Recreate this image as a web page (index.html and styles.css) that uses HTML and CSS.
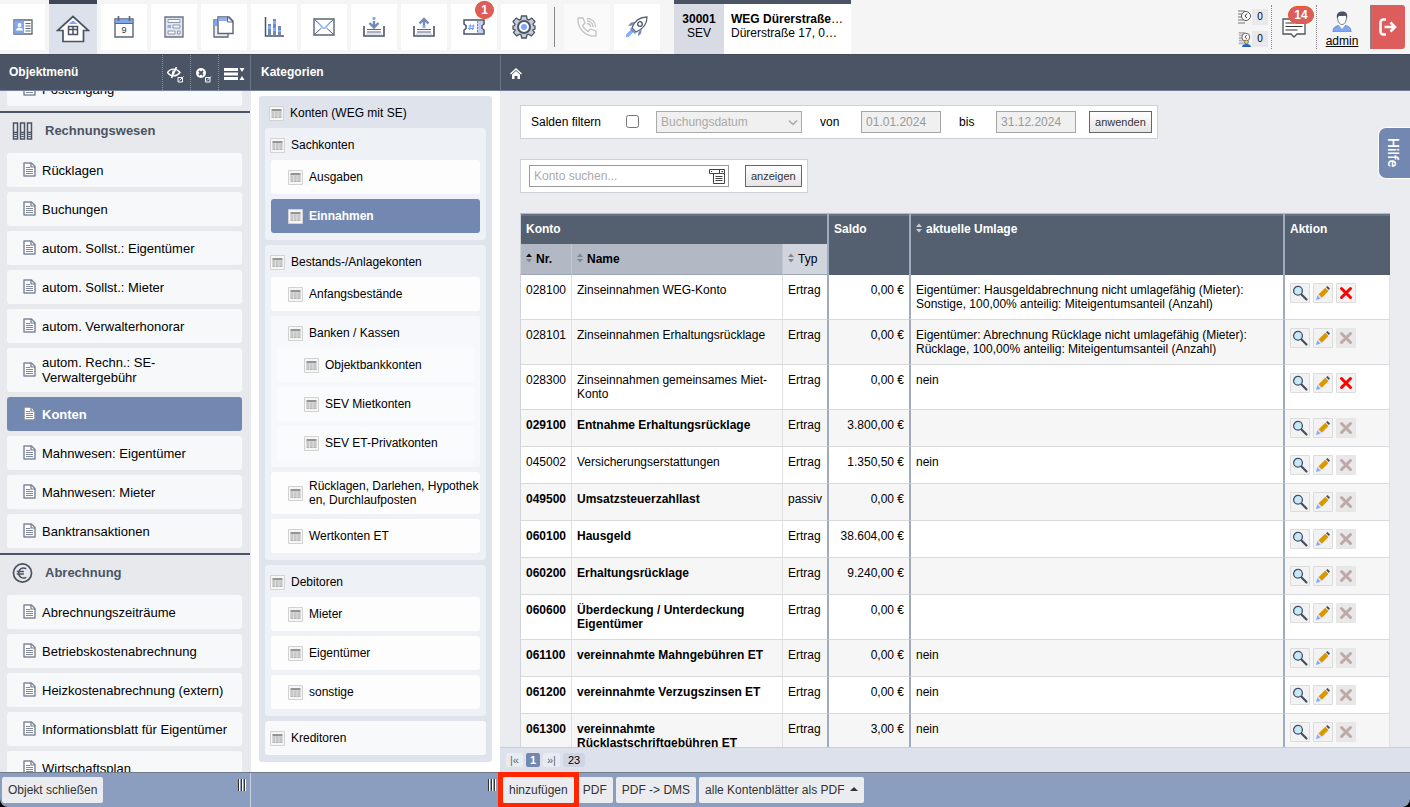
FILE: index.html
```html
<!DOCTYPE html>
<html lang="de">
<head>
  <meta charset="UTF-8">
  <meta name="viewport" content="width=device-width, initial-scale=1.0">
  <title>Konten - WEG Dürerstraße</title>
  <link rel="stylesheet" href="styles.css">
</head>
<body>
  <!-- shared icons -->
  <svg class="sprite" aria-hidden="true">
    <symbol id="i-doc" viewBox="0 0 13 15">
      <path d="M1 1h7.500L12 4.500V14H1z" fill="#fff" stroke="#80889a" stroke-width="1.500" stroke-linejoin="round"/>
      <path d="M8 1v4h4" fill="none" stroke="#6d7587" stroke-width="1.200"/>
      <path d="M3 5.500h4M3 7.500h7M3 9.500h7M3 11.500h7" fill="none" stroke="#80889a" stroke-width="1.200"/>
    </symbol>
    <symbol id="i-table" viewBox="0 0 15 15">
      <path d="M.5.5h14v14H.5z" fill="#f6f6f6" stroke="#d2d2d2"/>
      <path d="M2.500 3h10v2.500h-10z" fill="#949494"/>
      <path d="M2.500 5.500h10V12h-10z" fill="#b4b4b4"/>
      <path d="M2.500 6h10M2.500 8h10M2.500 10h10M5.500 5.500V12M9 5.500V12" stroke="#e4e4e4" stroke-width=".8"/>
    </symbol>
    <symbol id="i-view" viewBox="0 0 18 18">
      <path d="M10 10l5.500 5.500" stroke="#454f62" stroke-width="2.200" stroke-linecap="round"/>
      <circle cx="7" cy="6.800" r="4.400" fill="#c5e8fb" stroke="#454f62" stroke-width="1.300"/>
    </symbol>
    <symbol id="i-edit" viewBox="0 0 18 18">
      <path d="M2 16l1.500-5 3.500 3.500z" fill="#7ea6ff"/>
      <path d="M3.300 11.500l1.200-1.200 3.400 3.400-1.200 1.200z" fill="#d5e2fb"/>
      <path d="M4.500 10.300l6.800-6.500 3.200 3.200-6.600 6.700z" fill="#dc9600"/>
      <path d="M12 3.200L13.500 2 16 4.500 14.800 6z" fill="#454f62"/>
    </symbol>
    <symbol id="i-delete" viewBox="0 0 18 18">
      <path d="M4.500 4.500l9 9M13.500 4.500l-9 9" stroke="currentColor" stroke-width="3" stroke-linecap="round"/>
    </symbol>
    <symbol id="i-sort" viewBox="0 0 6 10">
      <path d="M0 4l3-3.500L6 4z"/>
      <path d="M0 6l3 3.500L6 6z"/>
    </symbol>
    <symbol id="i-sort-asc" viewBox="0 0 6 10">
      <path d="M0 4l3-3.500L6 4z" fill="#111"/>
      <path d="M0 6l3 3.500L6 6z"/>
    </symbol>
    <symbol id="i-clock" viewBox="0 0 13 16">
      <path d="M0 2h7M0 5h6M0 8h6M0 11h6M0 14h7" stroke="#b4b4b4" stroke-width="2"/>
      <circle cx="8" cy="7" r="4.500" fill="#fff" stroke="#555"/>
      <path d="M9 4.500L7 7l2 2" fill="none" stroke="#333"/>
    </symbol>
  </svg>

  <div class="app">
    <header class="topbar">
      <nav class="tools" aria-label="Werkzeuge">
        <a class="tool tool-first" href="#" aria-label="Kontakte">
          <svg width="20" height="16" viewBox="0 0 20 16"><path d="M1 1h18v14H1z" fill="#fff" stroke="#5b6679" stroke-width="1.300"/><path d="M1.500 1.500H11v13H1.500z" fill="#7ea6f5"/><circle cx="6.500" cy="6" r="2" fill="#fff"/><path d="M3 11.500c0-4 7-4 7 0z" fill="#fff"/><path d="M12.500 4.500h5M12.500 7h5M12.500 9.500h5M12.500 12h5" stroke="#5b6679"/></svg>
        </a>
        <a class="tool tool-active" href="#" aria-label="Objekte">
          <svg width="34" height="28" viewBox="0 0 34 28"><path d="M17 1.500L1.500 15.500h5.500v11h20.500v-11h5z" fill="#fff" stroke="#4a5464" stroke-width="1.700"/><path d="M12.500 9L17 5.500 21.500 9z" fill="#7ea6ff"/><path d="M12.500 11.500h9v8h-9zM12.500 14.500h9M17 11.500v8" fill="none" stroke="#4a5464" stroke-width="1.500"/></svg>
        </a>
        <a class="tool" href="#" aria-label="Kalender">
          <svg width="20" height="22" viewBox="0 0 20 22"><path d="M1 3h18v18H1z" fill="#fff" stroke="#5b6679" stroke-width="1.400"/><path d="M2 3.500h16v3.500H2z" fill="#7ea6f5"/><path d="M1 7.500h18" stroke="#5b6679"/><path d="M4.500 0v5M15.500 0v5" stroke="#5b6679" stroke-width="1.600"/><text class="cal-day" x="10" y="17">9</text></svg>
        </a>
        <a class="tool" href="#" aria-label="Formulare">
          <svg width="20" height="22" viewBox="0 0 20 22"><path d="M1 1h18v20H1z" fill="#e3e6ee" stroke="#6c7587" stroke-width="1.400"/><path d="M4 3.500h12v3H4zM9 9h7v3H9zM4 15h7v3H4zM13.500 15H16v3h-2.500z" fill="#f8f9fb" stroke="#8b96ac"/><path d="M3.500 9H7v3H3.500z" fill="#8eaef0"/></svg>
        </a>
        <a class="tool" href="#" aria-label="Dokumente">
          <svg width="22" height="22" viewBox="0 0 22 22"><path d="M1 4h14v17H1z" fill="#edf0f5" stroke="#5b6679" stroke-width="1.300"/><path d="M1.500 3.500h3V10h-3z" fill="#7ea6f5"/><path d="M5 1h11l4 4v12.500H5z" fill="#fff" stroke="#5b6679" stroke-width="1.400"/><path d="M5.500 1.500H14V5H5.500z" fill="#8eaef5"/><path d="M14.500 1v5H20z" fill="#fff" stroke="#5b6679"/></svg>
        </a>
        <a class="tool" href="#" aria-label="Auswertungen">
          <svg width="20" height="20" viewBox="0 0 20 20"><path d="M1.500 0v19H20" fill="none" stroke="#4a5464" stroke-width="1.500"/><path d="M4 7h3v11H4zM9 2h3v16H9zM14 9h3v9h-3z" fill="#7388b3"/><path d="M4 9h3v3H4zM9 4h3v3H9zM9 11h3v3H9zM14 13h3v2h-3z" fill="#83abff"/></svg>
        </a>
        <a class="tool" href="#" aria-label="Nachrichten">
          <svg width="22" height="18" viewBox="0 0 22 18"><path d="M1 1h20v16H1z" fill="#fff" stroke="#5b6679" stroke-width="1.400"/><path d="M1 17l7.500-7M21 17l-7.500-7M1 1l5 4.500M21 1l-5 4.500" stroke="#5b6679"/><path d="M5 4.500l4.500 5c1 1 2 1 3 0l4.500-5" fill="none" stroke="#83abff" stroke-width="1.400"/></svg>
        </a>
        <a class="tool" href="#" aria-label="Eingang">
          <svg width="22" height="20" viewBox="0 0 22 20"><path d="M1 9v10h20V9" fill="none" stroke="#4a5464" stroke-width="1.600"/><path d="M3 17h16" stroke="#dfe3ec" stroke-width="2"/><path d="M4 12.500h14M4 15h14" stroke="#5b6679"/><path d="M11 4v6M6.500 6L11 10.500 15.500 6" fill="none" stroke="#7388b3" stroke-width="2.400"/><path d="M9.500 0h3v3h-3z" fill="#83abff"/></svg>
        </a>
        <a class="tool" href="#" aria-label="Ausgang">
          <svg width="22" height="20" viewBox="0 0 22 20"><path d="M1 9v10h20V9" fill="none" stroke="#4a5464" stroke-width="1.600"/><path d="M3 17h16" stroke="#dfe3ec" stroke-width="2"/><path d="M4 12.500h14M4 15h14" stroke="#5b6679"/><path d="M11 2v6M6.500 6.500L11 2l4.500 4.500" fill="none" stroke="#7388b3" stroke-width="2.400"/><path d="M9.500 8h3v3h-3z" fill="#83abff"/></svg>
        </a>
        <a class="tool" href="#" aria-label="Tickets">
          <svg width="22" height="16" viewBox="0 0 22 16"><path d="M1 1h20v4l-2 1.500v3l2 1.500v4H1v-4l2-1.500v-3L1 5z" fill="#fff" stroke="#4a5464" stroke-width="1.500"/><path d="M14 2h6v3l-2 1v4l2 1v3h-6z" fill="#c2cff0"/><path d="M14.500 2v12" stroke="#7388b3" stroke-dasharray="2 1"/><path d="M7.500 5.500L6.500 11M10.500 5.500L9.500 11M5.500 7h6M5 9.500h6" stroke="#6f99f5"/></svg>
          <span class="badge badge-small">1</span>
        </a>
        <a class="tool" href="#" aria-label="Einstellungen">
          <svg width="24" height="24" viewBox="0 0 24 24"><path d="M9.500 1h5l.6 3.200 1.800.8L19.600 3 23 6.600l-2 2.600.5 1.300 1.500.5v3l-2.200 1 1.700 2.500-3.200 3.400-2.700-1.700-1.700.8-.6 3h-4.600l-.6-3-1.700-.8-2.700 1.700-3.200-3.400L3.200 15 1 14v-3l1.500-.5.5-1.300-2-2.600L4.400 3l2.700 2 1.800-.8z" fill="#c6ccd9" stroke="#4a5464" stroke-width="1.300"/><circle cx="12" cy="12" r="6" fill="#fff" stroke="#4a5464" stroke-width="2"/><circle cx="12" cy="12" r="3" fill="#7ea6ff"/></svg>
        </a>
        <span class="tool-divider"></span>
        <a class="tool tool-disabled" href="#" aria-label="Telefon">
          <svg width="20" height="20" viewBox="0 0 20 20" fill="none" stroke="#c2c2c2" stroke-width="1.300" stroke-linejoin="round"><path d="M1 1h5l2 5-2.500 2.500c1 2.500 3 4.500 5.500 6l2.500-2.500 5.500 2v5C9 20 0 12 1 1z"/><path d="M10 1.500c5 0 8.500 3.500 8.500 8.500M10 4c3.500 0 6 2.500 6 6M10 6.500c2 0 3.500 1.500 3.500 3.500"/></svg>
        </a>
        <a class="tool" href="#" aria-label="Start">
          <svg width="22" height="22" viewBox="0 0 22 22"><path d="M6 9.500L2 10l3-3.500 3.500-.5zM12.500 16l-.5 4.500 3-3 .8-4z" fill="#7388b3"/><path d="M6 12c2-6 7-11 15-11 0 7-4 12-11 15z" fill="#fff" stroke="#5b6679" stroke-width="1.300"/><path d="M1.500 19.500l4-4" stroke="#83abff" stroke-width="3.500" stroke-linecap="round"/><path d="M4.500 12.500l5 5" stroke="#7388b3" stroke-width="1.500"/><circle cx="14" cy="8" r="2.300" fill="#fff" stroke="#4a5464" stroke-width="1.300"/></svg>
        </a>
      </nav>

      <a class="object" href="#">
        <span class="object-id"><b>30001</b><span>SEV</span></span>
        <span class="object-name"><span><b>WEG Dürerstraße</b>…</span><span>Dürerstraße 17, 0…</span></span>
      </a>

      <div class="status">
        <div class="counters">
          <span class="counter"><svg width="13" height="16"><use href="#i-clock"/></svg><span>0</span></span>
          <span class="counter"><svg width="13" height="16" viewBox="0 0 13 16"><use href="#i-clock" width="13" height="14"/><circle cx="8.500" cy="11" r="2" fill="#f2c14e" stroke="#555" stroke-width=".6"/><path d="M4 16c0-4 9-4 9 0z" fill="#1d63c4"/></svg><span>0</span></span>
        </div>
        <a class="messages" href="#" aria-label="Mitteilungen">
          <svg width="24" height="20" viewBox="0 0 24 20"><path d="M1 1h22v15h-8l-3 3-3-3H1z" fill="#fff" stroke="#4a5464" stroke-width="1.300"/><path d="M3.500 5H12M3.500 8.500h17M3.500 12h12" stroke="#333" stroke-width="1.200"/></svg>
          <span class="badge">14</span>
        </a>
        <a class="user" href="#">
          <svg width="20" height="21" viewBox="0 0 20 21"><path d="M1 21c0-5 3-6 6-6.500l3 3 3-3c3 .5 6 1.500 6 6.500z" fill="#7ea6f5" stroke="#6f8fc8"/><path d="M7.500 12h5v3L10 18l-2.500-3z" fill="#fff"/><path d="M5.500 5.500c0 5 2 8 4.500 8s4.500-3 4.500-8L13 4H7z" fill="#fff" stroke="#4a5464" stroke-width=".8"/><path d="M5 7.500C4 2 7 .5 10.500.500S16 3 15 7.500l-1.500-3-3 .5L7 5z" fill="#4a5464"/></svg>
          <span>admin</span>
        </a>
        <button class="logout" type="button" aria-label="Abmelden">
          <svg width="18" height="18" viewBox="0 0 18 18" fill="none" stroke="#fff" stroke-width="2.600"><path d="M7 1.500H4.500a3 3 0 0 0-3 3v9a3 3 0 0 0 3 3H7"/><path d="M5.500 9H15M11.500 4.500L16 9l-4.500 4.500"/></svg>
        </button>
      </div>
    </header>

    <div class="headbar">
      <div class="head-menu">
        <h2>Objektmenü</h2>
        <button type="button" aria-label="Ausblenden">
          <svg width="17" height="16" viewBox="0 0 17 16" fill="none" stroke="#fff"><path d="M.5 5.500C3.500 1 9.500 1 13 5.500 9.500 10 3.500 10 .5 5.500z" stroke-width="1.400"/><path d="M6.500 3.500l-1 4M9.500 0l-5 11" stroke-width="1.700"/><path d="M11 10.500h4.500V15H11zM12.500 13.500L16.500 9.500"/></svg>
        </button>
        <button type="button" aria-label="Schließen">
          <svg width="17" height="16" viewBox="0 0 17 16"><circle cx="6" cy="6" r="5" fill="#fff"/><path d="M4 4l4 4M8 4L4 8" stroke="#4a5464" stroke-width="1.800"/><path d="M10.500 10.500H15V15h-4.500zM12 13.500L16 9.500" fill="none" stroke="#fff"/></svg>
        </button>
        <button class="wide" type="button" aria-label="Ansicht">
          <svg width="21" height="12" viewBox="0 0 21 12"><path d="M0 1.500h14M0 6h14M0 10.500h14" stroke="#fff" stroke-width="3"/><path d="M15.500 0h5L18 4zM15.500 12h5L18 8z" fill="#fff"/></svg>
        </button>
      </div>
      <div class="head-categories"><h2>Kategorien</h2></div>
      <div class="head-path">
        <a href="#" aria-label="Start"><svg width="12" height="11" viewBox="0 0 12 11"><path d="M6 0l6 5.500-1 1L6 2 1 6.500l-1-1z" fill="#fff"/><path d="M2 6.500L6 3l4 3.500V11H7.500V8h-3v3H2z" fill="#fff"/></svg></a>
      </div>
    </div>

    <main class="columns">
      <nav class="menu" aria-label="Objektmenü">
        <div class="menu-scroll">
          <a class="menu-item" href="#"><svg><use href="#i-doc"/></svg>Posteingang</a>

          <h3 class="menu-title">
            <svg width="20" height="18" viewBox="0 0 20 18" fill="none" stroke="#4a5464" stroke-width="1.500"><path d="M1 1h4v16H1zM8 1h4v16H8zM15 1h4v16h-4z"/><path d="M1 10.500h4M8 10.500h4M15 10.500h4"/><path d="M2.500 12v4M9.500 12v4M16.500 12v4M3.500 12v4M10.500 12v4M17.500 12v4" stroke-dasharray="1 1"/></svg>
            Rechnungswesen
          </h3>
          <a class="menu-item" href="#"><svg><use href="#i-doc"/></svg>Rücklagen</a>
          <a class="menu-item" href="#"><svg><use href="#i-doc"/></svg>Buchungen</a>
          <a class="menu-item" href="#"><svg><use href="#i-doc"/></svg>autom. Sollst.: Eigentümer</a>
          <a class="menu-item" href="#"><svg><use href="#i-doc"/></svg>autom. Sollst.: Mieter</a>
          <a class="menu-item" href="#"><svg><use href="#i-doc"/></svg>autom. Verwalterhonorar</a>
          <a class="menu-item" href="#"><svg><use href="#i-doc"/></svg>autom. Rechn.: SE-Verwaltergebühr</a>
          <a class="menu-item selected" href="#" aria-current="page"><svg><use href="#i-doc"/></svg>Konten</a>
          <a class="menu-item" href="#"><svg><use href="#i-doc"/></svg>Mahnwesen: Eigentümer</a>
          <a class="menu-item" href="#"><svg><use href="#i-doc"/></svg>Mahnwesen: Mieter</a>
          <a class="menu-item" href="#"><svg><use href="#i-doc"/></svg>Banktransaktionen</a>

          <h3 class="menu-title">
            <svg width="22" height="22" viewBox="0 0 22 22" fill="none" stroke="#4a5464" stroke-width="1.800"><circle cx="11" cy="11" r="9.500"/><path d="M15 6.500c-4-2-8 0-8 4.500s4 6.500 8 4.500M5 9.500h7.500M5 12h7.500" stroke-width="1.500"/></svg>
            Abrechnung
          </h3>
          <a class="menu-item" href="#"><svg><use href="#i-doc"/></svg>Abrechnungszeiträume</a>
          <a class="menu-item" href="#"><svg><use href="#i-doc"/></svg>Betriebskostenabrechnung</a>
          <a class="menu-item" href="#"><svg><use href="#i-doc"/></svg>Heizkostenabrechnung (extern)</a>
          <a class="menu-item" href="#"><svg><use href="#i-doc"/></svg>Informationsblatt für Eigentümer</a>
          <a class="menu-item" href="#"><svg><use href="#i-doc"/></svg>Wirtschaftsplan</a>
        </div>
      </nav>

      <nav class="categories" aria-label="Kategorien">
        <div class="group root">
          <a class="group-title" href="#"><svg><use href="#i-table"/></svg>Konten (WEG mit SE)</a>

          <div class="group">
            <a class="group-title" href="#"><svg><use href="#i-table"/></svg>Sachkonten</a>
            <a class="leaf" href="#"><svg><use href="#i-table"/></svg>Ausgaben</a>
            <a class="leaf selected" href="#" aria-current="page"><svg><use href="#i-table"/></svg>Einnahmen</a>
          </div>

          <div class="group">
            <a class="group-title" href="#"><svg><use href="#i-table"/></svg>Bestands-/Anlagekonten</a>
            <a class="leaf" href="#"><svg><use href="#i-table"/></svg>Anfangsbestände</a>
            <div class="group nested">
              <a class="group-title" href="#"><svg><use href="#i-table"/></svg>Banken / Kassen</a>
              <a class="leaf" href="#"><svg><use href="#i-table"/></svg>Objektbankkonten</a>
              <a class="leaf" href="#"><svg><use href="#i-table"/></svg>SEV Mietkonten</a>
              <a class="leaf" href="#"><svg><use href="#i-table"/></svg>SEV ET-Privatkonten</a>
            </div>
            <a class="leaf" href="#"><svg><use href="#i-table"/></svg>Rücklagen, Darlehen, Hypotheken, Durchlaufposten</a>
            <a class="leaf" href="#"><svg><use href="#i-table"/></svg>Wertkonten ET</a>
          </div>

          <div class="group">
            <a class="group-title" href="#"><svg><use href="#i-table"/></svg>Debitoren</a>
            <a class="leaf" href="#"><svg><use href="#i-table"/></svg>Mieter</a>
            <a class="leaf" href="#"><svg><use href="#i-table"/></svg>Eigentümer</a>
            <a class="leaf" href="#"><svg><use href="#i-table"/></svg>sonstige</a>
          </div>

          <a class="leaf top-leaf" href="#"><svg><use href="#i-table"/></svg>Kreditoren</a>
        </div>
      </nav>

      <section class="content">
        <div class="content-scroll">
          <form class="panel filter">
            <label for="saldo-filter">Salden filtern</label>
            <input type="checkbox" id="saldo-filter">
            <span class="select">
              <select aria-label="Datumsart" disabled><option>Buchungsdatum</option></select>
              <svg width="10" height="6" viewBox="0 0 10 6"><path d="M1 .5l4 4 4-4" fill="none" stroke="#aaa" stroke-width="1.500"/></svg>
            </span>
            <label class="label-from" for="date-from">von</label>
            <input class="field date" type="text" id="date-from" value="01.01.2024" disabled>
            <label class="label-to" for="date-to">bis</label>
            <input class="field date" type="text" id="date-to" value="31.12.2024" disabled>
            <button class="btn" type="button">anwenden</button>
          </form>

          <form class="panel search">
            <span class="search-field">
              <input class="field" type="text" placeholder="Konto suchen..." aria-label="Konto suchen">
              <svg width="16" height="15" viewBox="0 0 16 15" fill="#fff" stroke="#444"><path d="M.5.5h15v4H.5z"/><path d="M4.500 4.500h11v10h-11z"/><path d="M6.500 7.500h7M6.500 9.500h7M6.500 11.500h7M10.500 1v3M2 2.500h1"/><path d="M12 2h2.500l-1.200 1.500z" fill="#444" stroke="none"/></svg>
            </span>
            <button class="btn" type="button">anzeigen</button>
          </form>

          <table class="accounts">
            <colgroup>
              <col class="c-nr"><col class="c-name"><col class="c-type"><col class="c-saldo"><col><col class="c-action">
            </colgroup>
            <thead>
              <tr>
                <th colspan="3">Konto</th>
                <th rowspan="2" class="main">Saldo</th>
                <th rowspan="2" class="main"><svg class="sort light"><use href="#i-sort"/></svg>aktuelle Umlage</th>
                <th rowspan="2" class="main">Aktion</th>
              </tr>
              <tr class="sub">
                <th><svg class="sort"><use href="#i-sort-asc"/></svg>Nr.</th>
                <th><svg class="sort"><use href="#i-sort"/></svg>Name</th>
                <th class="type"><svg class="sort"><use href="#i-sort"/></svg>Typ</th>
              </tr>
            </thead>
            <tbody>
              <tr>
                <td>028100</td><td>Zinseinnahmen WEG-Konto</td><td>Ertrag</td><td class="main num">0,00 €</td>
                <td class="main">Eigentümer: Hausgeldabrechnung nicht umlagefähig (Mieter): Sonstige, 100,00% anteilig: Miteigentumsanteil (Anzahl)</td>
                <td class="main"><div class="actions">
                  <button type="button" aria-label="Anzeigen"><svg><use href="#i-view"/></svg></button>
                  <button type="button" aria-label="Bearbeiten"><svg><use href="#i-edit"/></svg></button>
                  <button type="button" aria-label="Löschen"><svg><use href="#i-delete"/></svg></button>
                </div></td>
              </tr>
              <tr>
                <td>028101</td><td>Zinseinnahmen Erhaltungsrücklage</td><td>Ertrag</td><td class="main num">0,00 €</td>
                <td class="main">Eigentümer: Abrechnung Rücklage nicht umlagefähig (Mieter): Rücklage, 100,00% anteilig: Miteigentumsanteil (Anzahl)</td>
                <td class="main"><div class="actions">
                  <button type="button" aria-label="Anzeigen"><svg><use href="#i-view"/></svg></button>
                  <button type="button" aria-label="Bearbeiten"><svg><use href="#i-edit"/></svg></button>
                  <button type="button" aria-label="Löschen" disabled><svg><use href="#i-delete"/></svg></button>
                </div></td>
              </tr>
              <tr>
                <td>028300</td><td>Zinseinnahmen gemeinsames Miet-Konto</td><td>Ertrag</td><td class="main num">0,00 €</td>
                <td class="main">nein</td>
                <td class="main"><div class="actions">
                  <button type="button" aria-label="Anzeigen"><svg><use href="#i-view"/></svg></button>
                  <button type="button" aria-label="Bearbeiten"><svg><use href="#i-edit"/></svg></button>
                  <button type="button" aria-label="Löschen"><svg><use href="#i-delete"/></svg></button>
                </div></td>
              </tr>
              <tr class="strong">
                <td>029100</td><td>Entnahme Erhaltungsrücklage</td><td>Ertrag</td><td class="main num">3.800,00 €</td>
                <td class="main"></td>
                <td class="main"><div class="actions">
                  <button type="button" aria-label="Anzeigen"><svg><use href="#i-view"/></svg></button>
                  <button type="button" aria-label="Bearbeiten"><svg><use href="#i-edit"/></svg></button>
                  <button type="button" aria-label="Löschen" disabled><svg><use href="#i-delete"/></svg></button>
                </div></td>
              </tr>
              <tr>
                <td>045002</td><td>Versicherungserstattungen</td><td>Ertrag</td><td class="main num">1.350,50 €</td>
                <td class="main">nein</td>
                <td class="main"><div class="actions">
                  <button type="button" aria-label="Anzeigen"><svg><use href="#i-view"/></svg></button>
                  <button type="button" aria-label="Bearbeiten"><svg><use href="#i-edit"/></svg></button>
                  <button type="button" aria-label="Löschen" disabled><svg><use href="#i-delete"/></svg></button>
                </div></td>
              </tr>
              <tr class="strong">
                <td>049500</td><td>Umsatzsteuerzahllast</td><td>passiv</td><td class="main num">0,00 €</td>
                <td class="main"></td>
                <td class="main"><div class="actions">
                  <button type="button" aria-label="Anzeigen"><svg><use href="#i-view"/></svg></button>
                  <button type="button" aria-label="Bearbeiten"><svg><use href="#i-edit"/></svg></button>
                  <button type="button" aria-label="Löschen" disabled><svg><use href="#i-delete"/></svg></button>
                </div></td>
              </tr>
              <tr class="strong">
                <td>060100</td><td>Hausgeld</td><td>Ertrag</td><td class="main num">38.604,00 €</td>
                <td class="main"></td>
                <td class="main"><div class="actions">
                  <button type="button" aria-label="Anzeigen"><svg><use href="#i-view"/></svg></button>
                  <button type="button" aria-label="Bearbeiten"><svg><use href="#i-edit"/></svg></button>
                  <button type="button" aria-label="Löschen" disabled><svg><use href="#i-delete"/></svg></button>
                </div></td>
              </tr>
              <tr class="strong">
                <td>060200</td><td>Erhaltungsrücklage</td><td>Ertrag</td><td class="main num">9.240,00 €</td>
                <td class="main"></td>
                <td class="main"><div class="actions">
                  <button type="button" aria-label="Anzeigen"><svg><use href="#i-view"/></svg></button>
                  <button type="button" aria-label="Bearbeiten"><svg><use href="#i-edit"/></svg></button>
                  <button type="button" aria-label="Löschen" disabled><svg><use href="#i-delete"/></svg></button>
                </div></td>
              </tr>
              <tr class="strong">
                <td>060600</td><td>Überdeckung / Unterdeckung Eigentümer</td><td>Ertrag</td><td class="main num">0,00 €</td>
                <td class="main"></td>
                <td class="main"><div class="actions">
                  <button type="button" aria-label="Anzeigen"><svg><use href="#i-view"/></svg></button>
                  <button type="button" aria-label="Bearbeiten"><svg><use href="#i-edit"/></svg></button>
                  <button type="button" aria-label="Löschen" disabled><svg><use href="#i-delete"/></svg></button>
                </div></td>
              </tr>
              <tr class="strong">
                <td>061100</td><td>vereinnahmte Mahngebühren ET</td><td>Ertrag</td><td class="main num">0,00 €</td>
                <td class="main">nein</td>
                <td class="main"><div class="actions">
                  <button type="button" aria-label="Anzeigen"><svg><use href="#i-view"/></svg></button>
                  <button type="button" aria-label="Bearbeiten"><svg><use href="#i-edit"/></svg></button>
                  <button type="button" aria-label="Löschen" disabled><svg><use href="#i-delete"/></svg></button>
                </div></td>
              </tr>
              <tr class="strong">
                <td>061200</td><td>vereinnahmte Verzugszinsen ET</td><td>Ertrag</td><td class="main num">0,00 €</td>
                <td class="main">nein</td>
                <td class="main"><div class="actions">
                  <button type="button" aria-label="Anzeigen"><svg><use href="#i-view"/></svg></button>
                  <button type="button" aria-label="Bearbeiten"><svg><use href="#i-edit"/></svg></button>
                  <button type="button" aria-label="Löschen" disabled><svg><use href="#i-delete"/></svg></button>
                </div></td>
              </tr>
              <tr class="strong">
                <td>061300</td><td>vereinnahmte Rücklastschriftgebühren ET</td><td>Ertrag</td><td class="main num">3,00 €</td>
                <td class="main">nein</td>
                <td class="main"><div class="actions">
                  <button type="button" aria-label="Anzeigen"><svg><use href="#i-view"/></svg></button>
                  <button type="button" aria-label="Bearbeiten"><svg><use href="#i-edit"/></svg></button>
                  <button type="button" aria-label="Löschen" disabled><svg><use href="#i-delete"/></svg></button>
                </div></td>
              </tr>
            </tbody>
          </table>
        </div>

        <nav class="pager" aria-label="Seiten">
          <a href="#" aria-label="Erste Seite">|«</a>
          <a class="current" href="#" aria-current="page">1</a>
          <a href="#" aria-label="Letzte Seite">»|</a>
          <span class="total">23</span>
        </nav>
        <button class="help" type="button">Hilfe</button>
      </section>
    </main>

    <footer class="footer">
      <div class="foot-menu">
        <button type="button">Objekt schließen</button>
        <span class="grip"><i></i><i></i><i></i></span>
      </div>
      <div class="foot-categories">
        <span class="grip"><i></i><i></i><i></i></span>
      </div>
      <div class="foot-actions">
        <button class="marked" type="button">hinzufügen</button>
        <button type="button">PDF</button>
        <button type="button">PDF -&gt; DMS</button>
        <button type="button">alle Kontenblätter als PDF <span class="caret"></span></button>
      </div>
    </footer>
  </div>
</body>
</html>
```
FILE: styles.css
```css
:root {
  --dark: #4a5464;
  --blue: #7388b0;
  --foot: #8c9ebf;
  --page: #ebecf0;
}

* {
  box-sizing: border-box;
}

body {
  margin: 0;
  background: #000;
  color: #000;
  font: 12px/14px "Liberation Sans", Arial, sans-serif;
}

a {
  color: inherit;
  text-decoration: none;
}

svg {
  display: block;
  flex: none;
}

button,
input,
select {
  font: inherit;
  color: inherit;
}

h2,
h3 {
  margin: 0;
}

.sprite {
  position: absolute;
  width: 0;
  height: 0;
}

.app {
  display: grid;
  grid-template-rows: 54px 37px minmax(0, 1fr) 35px;
  height: 100vh;
}

/* top bar */
.topbar {
  display: flex;
  background: #f5f5f5;
}

.tools {
  display: flex;
  align-items: center;
  gap: 4px;
}

.tool {
  position: relative;
  display: flex;
  align-items: center;
  justify-content: center;
  width: 46px;
  height: 46px;
  background: #fff;
}

.tool-first {
  width: 45px;
}

.tool-active {
  width: 48px;
  height: 54px;
  border-top: 4px solid #3f4757;
  background: #dde1eb;
}

.tool-disabled {
  background: #fafafa;
}

.tool-divider {
  width: 1px;
  height: 40px;
  margin: 0 5px 0 3px;
  background: #888;
}

.cal-day {
  font-size: 9px;
  text-anchor: middle;
  fill: #333;
}

.badge {
  position: absolute;
  top: 6px;
  right: 2px;
  width: 26px;
  height: 18px;
  border: 1px solid #e9562a;
  border-radius: 9px;
  background: #dc5d5b;
  color: #fff;
  font: bold 12px/16px "Liberation Sans", Arial, sans-serif;
  text-align: center;
}

.badge-small {
  top: -3px;
  right: 3px;
  width: 19px;
}

.object {
  display: flex;
  width: 177px;
  margin-left: 14px;
  border-top: 4px solid var(--dark);
  background: #fff;
}

.object-id,
.object-name {
  display: flex;
  flex-direction: column;
  padding-top: 8px;
  white-space: nowrap;
}

.object-id {
  align-items: center;
  width: 50px;
  background: #d8dbe4;
}

.object-name {
  padding-left: 7px;
}

.status {
  display: flex;
  align-items: center;
  margin-left: auto;
  padding-right: 5px;
}

.counters {
  display: grid;
  gap: 6px;
  padding: 2px 3px 0 0;
}

.counter {
  display: flex;
  gap: 1px;
}

.counter span {
  width: 16px;
  background: #e8e9ed;
  font-size: 10px;
  line-height: 16px;
  text-align: center;
}

.messages,
.user,
.logout {
  height: 44px;
  border: 0;
  border-left: 1px dotted #888;
}

.messages {
  position: relative;
  width: 45px;
  padding: 13px 0 0 10px;
}

.messages .badge {
  top: 1px;
}

.user {
  display: flex;
  flex-direction: column;
  align-items: center;
  gap: 2px;
  width: 54px;
  padding: 6px 3px 0 0;
  text-decoration: underline;
}

.logout {
  display: flex;
  align-items: center;
  justify-content: center;
  width: 35px;
  padding: 0;
  border-radius: 0 3px 3px 0;
  background: #dc5d5b;
}

/* column headings */
.headbar {
  display: flex;
  border-top: 1px solid #434b5a;
  border-bottom: 1px solid #73809d;
  background: var(--dark);
  color: #fff;
}

.headbar h2 {
  font-size: 12px;
  line-height: 35px;
}

.head-menu,
.head-categories {
  display: flex;
  width: 250px;
}

.head-menu h2 {
  flex: 1;
  padding-left: 9px;
}

.head-menu button {
  display: flex;
  align-items: center;
  width: 28px;
  padding: 4px 4px 0;
  border: 0;
  border-left: 1px dotted #8792a8;
  background: none;
}

.head-menu .wide {
  width: 32px;
  padding: 3px 5px 0;
}

.head-categories {
  padding-left: 10px;
  border-left: 1px solid #6b7588;
}

.head-path {
  display: flex;
  flex: 1;
  align-items: center;
  padding: 1px 0 0 9px;
  border-left: 1px solid #6b7588;
}

/* columns */
.columns {
  display: flex;
  min-height: 0;
}

.menu {
  width: 250px;
  overflow: hidden;
  background: #e8e9ec;
}

/* list is scrolled down a little, first entry is half hidden */
.menu-scroll {
  margin-top: -19px;
}

.menu-item {
  display: flex;
  align-items: center;
  gap: 6px;
  min-height: 34px;
  margin: 0 8px 5px 7px;
  padding: 7px 10px 7px 16px;
  border-radius: 3px;
  background: #f7f8fa;
  font-size: 13px;
  line-height: 15px;
}

.menu-item svg {
  width: 13px;
  height: 15px;
  margin-bottom: 2px;
}

.menu-title {
  display: flex;
  align-items: center;
  gap: 12px;
  height: 42px;
  padding: 0 0 5px 12px;
  border-top: 2px solid var(--dark);
  color: var(--dark);
  font-size: 13px;
}

.menu-title svg {
  width: 21px;
}

.selected {
  color: #fff;
  font-weight: bold;
}

.menu-item.selected,
.leaf.selected {
  background: var(--blue);
}

.categories {
  width: 250px;
  padding: 5px 8px 0 8px;
  border-left: 1px solid #e8e9ec;
  overflow: hidden;
  background: #fff;
}

.group {
  display: flex;
  flex-direction: column;
  gap: 5px;
  padding: 0 6px 7px;
  border-radius: 3px;
  background: #eef1f6;
}

.group svg {
  width: 15px;
  height: 15px;
}

.group-title {
  display: flex;
  align-items: center;
  gap: 6px;
  height: 32px;
  margin-bottom: -5px;
  padding-top: 2px;
}

.group > .group-title {
  margin-left: -1px;
}

.root {
  background: #dfe3ec;
}

.root > .group-title {
  padding-left: 5px;
}

.nested {
  background: #f6f8fb;
}

.nested > .group-title {
  padding-left: 12px;
}

.leaf {
  display: flex;
  align-items: center;
  gap: 6px;
  min-height: 34px;
  padding: 7px 0 7px 17px;
  border-radius: 3px;
  background: #fdfdfd;
  word-break: break-all;
}

.nested .leaf {
  padding-left: 27px;
  background: #fafbfd;
}

.top-leaf {
  padding-left: 5px;
  background: #f8f9fb;
}

/* content */
.content {
  position: relative;
  display: flex;
  flex: 1;
  flex-direction: column;
  min-width: 0;
  background: var(--page);
}

.content-scroll {
  flex: 1;
  min-height: 0;
  padding: 14px 20px 0;
  overflow: hidden;
}

.panel {
  display: flex;
  align-items: center;
  width: max-content;
  height: 34px;
  margin-bottom: 20px;
  border: 1px solid #ccd1da;
  background: #fff;
}

.filter {
  padding: 0 5px 0 10px;
}

.filter input[type="checkbox"] {
  width: 13px;
  height: 13px;
  margin: 0 17px 2px 25px;
}

.field,
.select select {
  height: 22px;
  padding: 0 4px;
  border: 1px solid #999;
  border-radius: 0;
  background: #fff;
}

.field:disabled,
.select select:disabled {
  border-color: #a5a5a5;
  background: #f0f0f0;
  color: #999;
  opacity: 1;
}

.field::placeholder {
  color: #aaa;
  opacity: 1;
}

.select {
  position: relative;
}

.select select {
  width: 146px;
  appearance: none;
}

.select select:disabled {
  border-color: #aaa;
  color: #aaa;
}

.select svg {
  position: absolute;
  top: 9px;
  right: 4px;
  pointer-events: none;
}

.date {
  width: 80px;
}

.label-from {
  width: 59px;
  padding-left: 18px;
}

.label-to {
  width: 55px;
  padding-left: 18px;
}

.btn {
  height: 22px;
  padding: 0 5px;
  border: 1px solid #666;
  border-radius: 0;
  background: linear-gradient(#fff, #e6e4e6);
  color: #333;
  font-size: 11px;
}

.filter .btn {
  margin-left: 13px;
}

.search {
  padding: 0 5px 0 8px;
}

.search-field {
  position: relative;
  width: 200px;
  margin-right: 16px;
}

.search-field .field {
  width: 100%;
}

.search-field svg {
  position: absolute;
  top: 4px;
  right: 4px;
}

/* accounts table */
.accounts {
  width: 100%;
  border-top: 1px solid #b5bac4;
  border-spacing: 0;
  table-layout: fixed;
}

.c-nr { width: 52px; }
.c-name { width: 211px; }
.c-type { width: 44px; }
.c-saldo { width: 82px; }
.c-action { width: 107px; }

.accounts th,
.accounts td {
  padding: 8px 5px;
  text-align: left;
  vertical-align: top;
}

.accounts th {
  background: #545f70;
  color: #fff;
}

.accounts thead tr:first-child th {
  box-shadow: inset 0 2px #677286;
}

.accounts .sub th {
  border-right: 1px solid #c4c8d0;
  border-bottom: 1px solid #9aa5b8;
  background: #b2b8c4;
  color: #000;
}

.accounts .sub .type {
  border-right: 0;
  background: #d0d4dd;
  font-weight: normal;
}

.accounts .main {
  border-left: 2px solid #a0acbd;
}

.accounts td {
  border-right: 1px solid #e0e0e0;
  border-bottom: 1px solid #d8d9dc;
  background: #fff;
}

.accounts td:nth-child(3),
.accounts td:nth-child(4),
.accounts td:nth-child(5) {
  border-right: 0;
}

.accounts tr > :first-child {
  border-left: 1px solid #d0d4da;
}

.accounts tbody tr:nth-child(even) td {
  background: #f6f6f6;
}

.strong td:nth-child(-n + 2) {
  font-weight: bold;
}

.accounts .num {
  text-align: right;
}

.sort {
  display: inline-block;
  width: 6px;
  height: 10px;
  margin-right: 4px;
  fill: #808691;
}

.light {
  fill: #c8ced9;
}

.actions {
  display: flex;
  gap: 3px;
}

.actions button {
  width: 20px;
  height: 20px;
  padding: 0;
  border: 1px solid #dcdcdc;
  border-radius: 1px;
  background: #f2f2f2;
  color: #f00;
}

.actions button:disabled {
  border-color: #e6e6e6;
  background: #e8e8e8;
  color: #bfa8a8;
}

.actions svg {
  width: 18px;
  height: 18px;
}

.pager {
  display: flex;
  align-items: center;
  gap: 3px;
  height: 25px;
  padding-left: 6px;
  border-top: 1px solid #c8cfdc;
  background: #dde1eb;
}

.pager > * {
  min-width: 17px;
  border-radius: 2px;
  background: #e8ebf1;
  color: #666;
  font-size: 11px;
  text-align: center;
}

.pager .current {
  min-width: 14px;
  background: var(--blue);
  color: #fff;
  font-weight: bold;
}

.pager .total {
  min-width: 22px;
  background: #cfd6e2;
  color: #000;
}

.help {
  position: absolute;
  top: 36px;
  right: 0;
  width: 32px;
  height: 52px;
  padding: 0;
  border: 1px solid #fff;
  border-right: 0;
  border-radius: 8px 0 0 8px;
  background: var(--blue);
  color: #fff;
  font: bold 14px/34px "Liberation Sans", Arial, sans-serif;
  font-family: Roboto, sans-serif;
  font-weight: 500;
  writing-mode: vertical-rl;
}

/* footer */
.footer {
  display: flex;
  border-top: 1px solid #737a88;
  border-radius: 0 0 8px 8px;
  background: var(--foot);
}

.foot-menu,
.foot-categories,
.foot-actions {
  display: flex;
  padding-top: 4px;
}

.foot-menu,
.foot-categories {
  width: 250px;
}

.foot-menu {
  padding-left: 2px;
}

.foot-categories {
  border-left: 1px solid #c6cfdf;
}

.foot-actions {
  gap: 3px;
  padding-left: 3px;
}

.footer button {
  height: 26px;
  padding: 0 6px;
  border: 0;
  border-radius: 2px;
  background: var(--page);
  color: #333;
}

.footer .marked {
  position: relative;
}

/* red frame round the add button */
.marked::after {
  content: "";
  position: absolute;
  inset: -5px;
  border: 5px solid #ff2600;
}

.grip {
  display: flex;
  gap: 1px;
  height: 12px;
  margin: 2px 4px 0 auto;
}

.grip i {
  width: 2px;
  border-left: 1px solid #333;
  background: #fff;
}

.caret {
  display: inline-block;
  margin-left: 2px;
  border: 4px solid transparent;
  border-top: 0;
  border-bottom-color: #333;
  vertical-align: 3px;
}
```
